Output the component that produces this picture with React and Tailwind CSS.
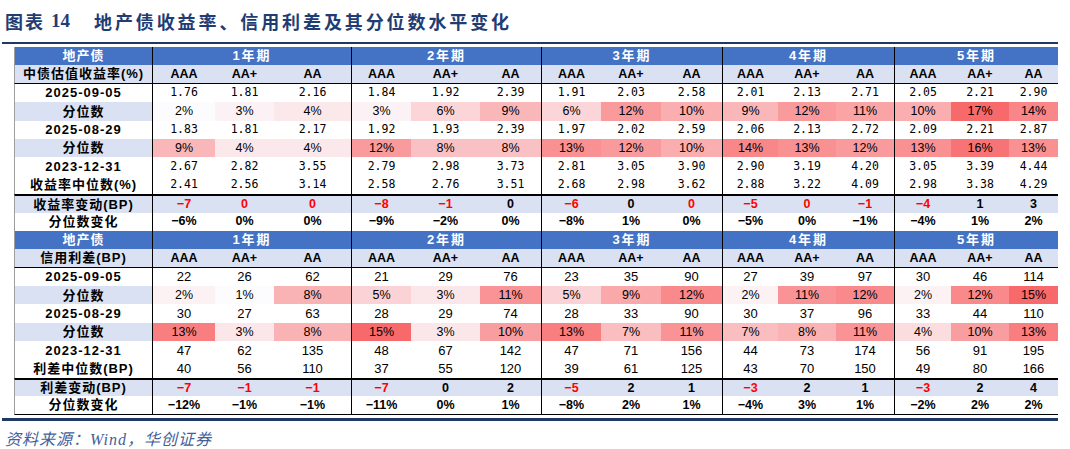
import React from "react";

// 地产债收益率、信用利差及其分位数 — two stacked Excel-style tables
const GROUPS = ["1年期", "2年期", "3年期", "4年期", "5年期"];
const RATINGS = ["AAA", "AA+", "AA"];

const cols =
  "grid grid-cols-[138px_63px_59px_77px_60px_69px_61px_60px_60px_61px_56px_58px_58px_57px_58px_49px]";

const labelFont = "font-['Liberation_Sans','Noto_Sans_CJK_SC',sans-serif] text-[13px] font-bold tracking-[1px]";
const monoFont = "font-['DejaVu_Sans_Mono',monospace] text-[11.5px]";
const sansFont = "font-['Liberation_Sans',sans-serif] text-[13px]";
const narrowFont = "font-['Liberation_Sans_Narrow','Liberation_Sans',sans-serif] text-[12.5px]";

function heat(v, min, max) {
  const t = Math.max(0, Math.min(1, (v - min) / (max - min)));
  const r = Math.round(252 + (248 - 252) * t);
  const g = Math.round(252 + (105 - 252) * t);
  const b = Math.round(255 + (107 - 255) * t);
  return `rgb(${r},${g},${b})`;
}

const yieldTable = {
  head: "中债估值收益率(%)",
  min: 2,
  max: 17,
  rows: [
    { label: "2025-09-05", kind: "mono", v: ["1.76", "1.81", "2.16", "1.84", "1.92", "2.39", "1.91", "2.03", "2.58", "2.01", "2.13", "2.71", "2.05", "2.21", "2.90"] },
    { label: "分位数", kind: "pct", v: [2, 3, 4, 3, 6, 9, 6, 12, 10, 9, 12, 11, 10, 17, 14] },
    { label: "2025-08-29", kind: "mono", v: ["1.83", "1.81", "2.17", "1.92", "1.93", "2.39", "1.97", "2.02", "2.59", "2.06", "2.13", "2.72", "2.09", "2.21", "2.87"] },
    { label: "分位数", kind: "pct", v: [9, 4, 4, 12, 8, 8, 13, 12, 10, 14, 13, 12, 13, 16, 13] },
    { label: "2023-12-31", kind: "mono", v: ["2.67", "2.82", "3.55", "2.79", "2.98", "3.73", "2.81", "3.05", "3.90", "2.90", "3.19", "4.20", "3.05", "3.39", "4.44"] },
    { label: "收益率中位数(%)", kind: "mono", v: ["2.41", "2.56", "3.14", "2.58", "2.76", "3.51", "2.68", "2.98", "3.62", "2.88", "3.22", "4.09", "2.98", "3.38", "4.29"] },
    {
      label: "收益率变动(BP)",
      kind: "chg",
      v: ["−7", "0", "0", "−8", "−1", "0", "−6", "0", "0", "−5", "0", "−1", "−4", "1", "3"],
      red: [1, 1, 1, 1, 1, 0, 1, 0, 1, 1, 1, 1, 1, 0, 0],
    },
    { label: "分位数变化", kind: "pchg", v: ["−6%", "0%", "0%", "−9%", "−2%", "0%", "−8%", "1%", "0%", "−5%", "0%", "−1%", "−4%", "1%", "2%"] },
  ],
};

const spreadTable = {
  head: "信用利差(BP)",
  min: 1,
  max: 15,
  last: true,
  rows: [
    { label: "2025-09-05", kind: "sans", v: [22, 26, 62, 21, 29, 76, 23, 35, 90, 27, 39, 97, 30, 46, 114] },
    { label: "分位数", kind: "pct", v: [2, 1, 8, 5, 3, 11, 5, 9, 12, 2, 11, 12, 2, 12, 15] },
    { label: "2025-08-29", kind: "sans", v: [30, 27, 63, 28, 29, 74, 28, 33, 90, 30, 37, 96, 33, 44, 110] },
    { label: "分位数", kind: "pct", v: [13, 3, 8, 15, 3, 10, 13, 7, 11, 7, 8, 11, 4, 10, 13] },
    { label: "2023-12-31", kind: "sans", v: [47, 62, 135, 48, 67, 142, 47, 71, 156, 44, 73, 174, 56, 91, 195] },
    { label: "利差中位数(BP)", kind: "sans", v: [40, 56, 110, 37, 55, 120, 39, 61, 125, 43, 70, 150, 49, 80, 166] },
    {
      label: "利差变动(BP)",
      kind: "chg",
      v: ["−7", "−1", "−1", "−7", "0", "2", "−5", "2", "1", "−3", "2", "1", "−3", "2", "4"],
      red: [1, 1, 1, 1, 0, 0, 1, 0, 0, 1, 0, 0, 1, 0, 0],
    },
    { label: "分位数变化", kind: "pchg", v: ["−12%", "−1%", "−1%", "−11%", "0%", "1%", "−8%", "2%", "1%", "−4%", "3%", "1%", "−2%", "2%", "2%"] },
  ],
};

function Table({ data }) {
  return (
    <div className={cols}>
      {/* header band */}
      <div className={`flex h-[18.4px] items-center justify-center border-l border-[#9e9e9e] bg-[#4472c4] text-white ${labelFont}`}>
        地产债
      </div>
      {GROUPS.map((g) => (
        <div
          key={g}
          className={`col-span-3 flex h-[18.4px] items-center justify-center border-l border-black bg-[#4472c4] text-white ${labelFont} tracking-[2px]`}
        >
          {g}
        </div>
      ))}

      {/* ratings row */}
      <div className={`flex h-[18.4px] items-center justify-center border-b border-l border-b-black border-l-[#9e9e9e] bg-[#d9e1f2] ${labelFont}`}>
        {data.head}
      </div>
      {GROUPS.map((g) =>
        RATINGS.map((r, j) => (
          <div
            key={g + r}
            className={`flex h-[18.4px] items-center justify-center border-b border-b-black bg-[#d9e1f2] font-bold text-black ${narrowFont} ${
              j === 0 ? "border-l border-l-black" : ""
            }`}
          >
            {r}
          </div>
        ))
      )}

      {data.rows.map((row, ri) => {
        const isLast = data.last && ri === data.rows.length - 1;
        const top = row.kind === "chg" ? "border-t-2 border-t-black" : "";
        const bottom = isLast ? "border-b border-b-black" : "";
        const labelBg = row.kind === "pct" || row.kind === "chg" ? "bg-[#d9e1f2]" : "bg-white";
        return (
          <React.Fragment key={ri}>
            <div
              className={`flex h-[18.4px] items-center justify-center border-l border-l-[#9e9e9e] text-black ${labelBg} ${labelFont} ${top} ${bottom}`}
            >
              {row.label}
            </div>
            {row.v.map((val, i) => {
              const edge = i % 3 === 0 ? "border-l border-l-black" : "";
              let cls = "";
              let style;
              let text = val;
              if (row.kind === "mono") cls = `bg-white text-black ${monoFont}`;
              if (row.kind === "sans") cls = `bg-white text-black ${sansFont}`;
              if (row.kind === "pct") {
                cls = `text-black ${narrowFont}`;
                style = { backgroundColor: heat(val, data.min, data.max) };
                text = `${val}%`;
              }
              if (row.kind === "chg")
                cls = `bg-[#d9e1f2] font-bold ${narrowFont} ${row.red[i] ? "text-[#ff0000]" : "text-black"}`;
              if (row.kind === "pchg") cls = `bg-white font-bold text-black ${narrowFont}`;
              return (
                <div
                  key={i}
                  style={style}
                  className={`flex h-[18.4px] items-center justify-center leading-none ${edge} ${top} ${bottom} ${cls}`}
                >
                  {text}
                </div>
              );
            })}
          </React.Fragment>
        );
      })}
    </div>
  );
}

export default function App() {
  return (
    <div className="h-[449px] w-[1070px] overflow-hidden bg-white">
      <div className="flex h-[42px] items-start pl-[5px] pt-[10px] leading-[22px] text-[#1f3d73]">
        <span className="font-['Noto_Sans_CJK_SC',sans-serif] text-[18px] font-bold tracking-[2px]">图表</span>
        <span className="ml-[6px] font-['Liberation_Serif',serif] text-[19px] font-bold">14</span>
        <span className="ml-[24px] font-['Noto_Sans_CJK_SC',sans-serif] text-[18px] font-bold tracking-[2.9px]">
          地产债收益率、信用利差及其分位数水平变化
        </span>
      </div>
      <div className="ml-[2px] h-[2px] w-[1056px] bg-[#1f3864]" />
      <div className="ml-[14px] mt-[3px] w-[1044px]">
        <Table data={yieldTable} />
        <Table data={spreadTable} />
      </div>
      <div className="ml-[2px] mt-[3px] h-[3px] w-[1056px] bg-[#1f3864]" />
      <div className="mt-[9px] pl-[5px] font-['Liberation_Serif','Noto_Sans_CJK_SC',serif] text-[16px] italic leading-[20px] tracking-[1px] text-[#44609a]">
        资料来源：Wind，华创证券
      </div>
    </div>
  );
}
